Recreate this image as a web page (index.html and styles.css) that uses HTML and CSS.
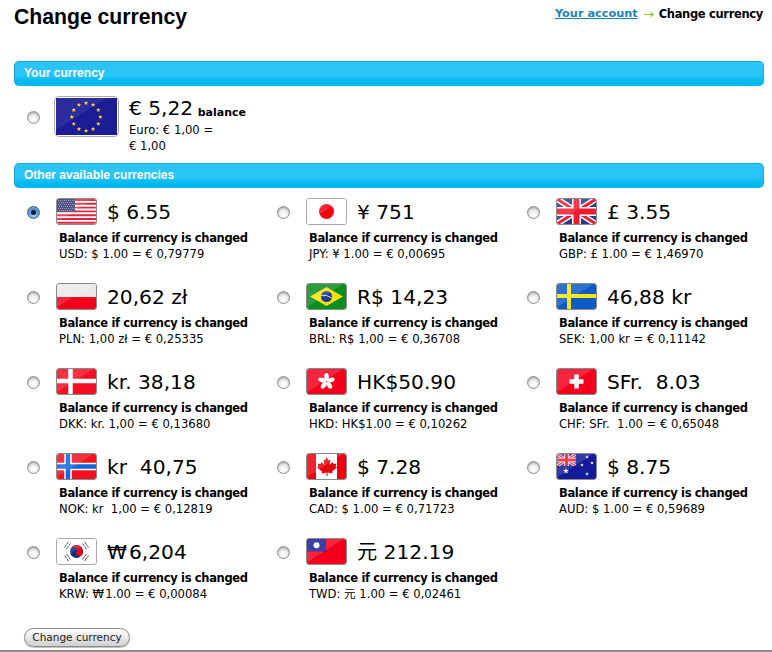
FILE: index.html
```html
<!DOCTYPE html>
<html lang="en">
<head>
<meta charset="utf-8">
<title>Change currency</title>
<link rel="stylesheet" href="styles.css">
</head>
<body>
<svg class="defs" width="0" height="0" aria-hidden="true">
  <symbol id="star" viewBox="-2 -2 4 4"><path d="M0-2 .5-.6 1.9-.6.8.2 1.2 1.6 0 .8-1.2 1.6-.8.2-1.9-.6-.5-.6Z" fill="currentColor"/></symbol>
  <symbol id="jack" viewBox="0 0 39 25" preserveAspectRatio="none">
    <rect width="39" height="25" fill="#2a3a8c"/>
    <path d="M0 0 39 25M39 0 0 25" stroke="#fff" stroke-width="6"/>
    <path d="M0 0 39 25M39 0 0 25" stroke="#ee1c30" stroke-width="3"/>
    <path d="M19.5 0V25M0 12.5H39" stroke="#fff" stroke-width="9"/>
    <path d="M19.5 0V25M0 12.5H39" stroke="#ee1c30" stroke-width="6"/>
  </symbol>
</svg>
<main class="page">
  <header class="top">
    <h1 class="title">Change currency</h1>
    <nav class="crumbs"><a href="#" class="crumb-link">Your account</a><svg class="crumb-arrow" viewBox="0 0 10 7" aria-hidden="true"><path d="M0 3.500H8M6.500 1.500 9.500 3.500 6.500 5.500" fill="none" stroke="#8ccb2a" stroke-width="1.100"/></svg><span class="crumb-here">Change currency</span></nav>
  </header>

  <form class="form">
    <h2 class="bar">Your currency</h2>
    <div class="current">
      <span class="radio"></span>
      <span class="flag flag-big">
        <svg viewBox="0 0 63 39" class="flag-art" preserveAspectRatio="none">
          <rect width="63" height="39" fill="#1c1c96"/>
          <g color="#ffd91a">
            <use href="#star" x="28.5" y="2.8" width="5" height="5"/>
            <use href="#star" x="35.8" y="4.8" width="5" height="5"/>
            <use href="#star" x="41.2" y="10.2" width="5" height="5"/>
            <use href="#star" x="43.2" y="17.5" width="5" height="5"/>
            <use href="#star" x="41.2" y="24.8" width="5" height="5"/>
            <use href="#star" x="35.8" y="30.2" width="5" height="5"/>
            <use href="#star" x="28.5" y="32.2" width="5" height="5"/>
            <use href="#star" x="21.2" y="30.2" width="5" height="5"/>
            <use href="#star" x="15.8" y="24.8" width="5" height="5"/>
            <use href="#star" x="13.8" y="17.5" width="5" height="5"/>
            <use href="#star" x="15.8" y="10.2" width="5" height="5"/>
            <use href="#star" x="21.2" y="4.8" width="5" height="5"/>
          </g>
        </svg>
      </span>
      <div class="current-info">
        <div class="amount">€ 5,22 <span class="amount-note">balance</span></div>
        <div class="rate">Euro: € 1,00 = € 1,00</div>
      </div>
    </div>

    <h2 class="bar">Other available currencies</h2>
    <div class="grid">
      <div class="cur">
        <div class="cur-head"><span class="radio radio-on"></span>
          <span class="flag"><svg viewBox="0 0 39 25" class="flag-art"><rect width="39" height="25" fill="#fff"/><path d="M0 1H39M0 4.800H39M0 8.600H39M0 12.400H39M0 16.200H39M0 20H39M0 23.800H39" stroke="#e0263a" stroke-width="1.900"/><rect width="18" height="12.500" fill="#30346f"/><path d="M1 1.500H18M2 3.500H18M1 5.500H18M2 7.500H18M1 9.500H18M2 11.500H18" stroke="#a9adc9" stroke-width=".8" stroke-dasharray=".9 1.100"/></svg></span>
          <span class="amount">$ 6.55</span></div>
        <div class="cur-body"><div class="note">Balance if currency is changed</div><div class="rate">USD: $ 1.00 = € 0,79779</div></div>
      </div>
      <div class="cur">
        <div class="cur-head"><span class="radio"></span>
          <span class="flag flag-thin"><svg viewBox="0 0 39 25" class="flag-art"><rect width="39" height="25" fill="#fff"/><circle cx="19.500" cy="12.500" r="7.500" fill="#f5000e"/></svg></span>
          <span class="amount">¥ 751</span></div>
        <div class="cur-body"><div class="note">Balance if currency is changed</div><div class="rate">JPY: ¥ 1.00 = € 0,00695</div></div>
      </div>
      <div class="cur">
        <div class="cur-head"><span class="radio"></span>
          <span class="flag"><svg viewBox="0 0 39 25" class="flag-art"><use href="#jack" width="39" height="25"/></svg></span>
          <span class="amount">£ 3.55</span></div>
        <div class="cur-body"><div class="note">Balance if currency is changed</div><div class="rate">GBP: £ 1.00 = € 1,46970</div></div>
      </div>

      <div class="cur">
        <div class="cur-head"><span class="radio"></span>
          <span class="flag"><svg viewBox="0 0 39 25" class="flag-art"><rect width="39" height="13" fill="#e9e9e9"/><rect y="13" width="39" height="12" fill="#f5001c"/></svg></span>
          <span class="amount">20,62 zł</span></div>
        <div class="cur-body"><div class="note">Balance if currency is changed</div><div class="rate">PLN: 1,00 zł = € 0,25335</div></div>
      </div>
      <div class="cur">
        <div class="cur-head"><span class="radio"></span>
          <span class="flag"><svg viewBox="0 0 39 25" class="flag-art"><rect width="39" height="25" fill="#0a8c1e"/><path d="M19.500 3 36 12.500 19.500 22 3 12.500Z" fill="#f7e011"/><circle cx="19.500" cy="12.500" r="5.600" fill="#1b3d8f"/><path d="M14.200 11.500Q20 10.500 24.800 14" stroke="#fff" stroke-width=".8" fill="none"/></svg></span>
          <span class="amount">R$ 14,23</span></div>
        <div class="cur-body"><div class="note">Balance if currency is changed</div><div class="rate">BRL: R$ 1,00 = € 0,36708</div></div>
      </div>
      <div class="cur">
        <div class="cur-head"><span class="radio"></span>
          <span class="flag"><svg viewBox="0 0 39 25" class="flag-art"><rect width="39" height="25" fill="#0b5bc4"/><path d="M0 12H39M12 0V25" stroke="#fbe316" stroke-width="4"/></svg></span>
          <span class="amount">46,88 kr</span></div>
        <div class="cur-body"><div class="note">Balance if currency is changed</div><div class="rate">SEK: 1,00 kr = € 0,11142</div></div>
      </div>

      <div class="cur">
        <div class="cur-head"><span class="radio"></span>
          <span class="flag"><svg viewBox="0 0 39 25" class="flag-art"><rect width="39" height="25" fill="#f50f22"/><path d="M0 12H39M13.500 0V25" stroke="#fff" stroke-width="4.500"/></svg></span>
          <span class="amount">kr. 38,18</span></div>
        <div class="cur-body"><div class="note">Balance if currency is changed</div><div class="rate">DKK: kr. 1,00 = € 0,13680</div></div>
      </div>
      <div class="cur">
        <div class="cur-head"><span class="radio"></span>
          <span class="flag"><svg viewBox="0 0 39 25" class="flag-art"><rect width="39" height="25" fill="#f5001c"/><g fill="#fff"><ellipse cx="19.500" cy="8" rx="2.300" ry="4"/><ellipse cx="19.500" cy="8" rx="2.300" ry="4" transform="rotate(72 19.500 12.500)"/><ellipse cx="19.500" cy="8" rx="2.300" ry="4" transform="rotate(144 19.500 12.500)"/><ellipse cx="19.500" cy="8" rx="2.300" ry="4" transform="rotate(216 19.500 12.500)"/><ellipse cx="19.500" cy="8" rx="2.300" ry="4" transform="rotate(288 19.500 12.500)"/></g></svg></span>
          <span class="amount">HK$50.90</span></div>
        <div class="cur-body"><div class="note">Balance if currency is changed</div><div class="rate">HKD: HK$1.00 = € 0,10262</div></div>
      </div>
      <div class="cur">
        <div class="cur-head"><span class="radio"></span>
          <span class="flag"><svg viewBox="0 0 39 25" class="flag-art"><rect width="39" height="25" fill="#f5001c"/><path d="M19.500 5.500V19.500M12.500 12.500H26.500" stroke="#fff" stroke-width="4.500"/></svg></span>
          <span class="amount">SFr.&nbsp; 8.03</span></div>
        <div class="cur-body"><div class="note">Balance if currency is changed</div><div class="rate">CHF: SFr.&nbsp; 1.00 = € 0,65048</div></div>
      </div>

      <div class="cur">
        <div class="cur-head"><span class="radio"></span>
          <span class="flag"><svg viewBox="0 0 39 25" class="flag-art"><rect width="39" height="25" fill="#f5101f"/><path d="M0 12.500H39M11 0V25" stroke="#fff" stroke-width="7.500"/><path d="M0 12.500H39M11 0V25" stroke="#1167d8" stroke-width="4.500"/></svg></span>
          <span class="amount">kr&nbsp; 40,75</span></div>
        <div class="cur-body"><div class="note">Balance if currency is changed</div><div class="rate">NOK: kr&nbsp; 1,00 = € 0,12819</div></div>
      </div>
      <div class="cur">
        <div class="cur-head"><span class="radio"></span>
          <span class="flag"><svg viewBox="0 0 39 25" class="flag-art"><rect width="39" height="25" fill="#f0000c"/><rect x="9" width="21" height="25" fill="#fff"/><path d="M19.500 3l2 3.500 2-1-1 5.500 3-3 1 2 3-.5-1 3 1.500 1-5 4 .5 2-5-1v3.500h-1v-3.500l-5 1 .5-2-5-4 1.500-1-1-3 3 .5 1-2 3 3-1-5.500 2 1z" fill="#e8000c"/></svg></span>
          <span class="amount">$ 7.28</span></div>
        <div class="cur-body"><div class="note">Balance if currency is changed</div><div class="rate">CAD: $ 1.00 = € 0,71723</div></div>
      </div>
      <div class="cur">
        <div class="cur-head"><span class="radio"></span>
          <span class="flag"><svg viewBox="0 0 39 25" class="flag-art"><rect width="39" height="25" fill="#141c9c"/><svg width="19" height="12" viewBox="0 0 39 25" preserveAspectRatio="none"><use href="#jack" width="39" height="25"/></svg><g color="#fff"><use href="#star" x="6" y="14" width="6" height="6"/><use href="#star" x="28" y="1" width="4" height="4"/><use href="#star" x="33" y="7" width="4" height="4"/><use href="#star" x="23" y="9" width="4" height="4"/><use href="#star" x="28" y="18" width="4" height="4"/></g></svg></span>
          <span class="amount">$ 8.75</span></div>
        <div class="cur-body"><div class="note">Balance if currency is changed</div><div class="rate">AUD: $ 1.00 = € 0,59689</div></div>
      </div>

      <div class="cur">
        <div class="cur-head"><span class="radio"></span>
          <span class="flag flag-thin"><svg viewBox="0 0 39 25" class="flag-art"><rect width="39" height="25" fill="#fff"/><circle cx="19.500" cy="12.500" r="6.500" fill="#0f2a80"/><path d="M13 12.500a6.500 6.500 0 0 1 13 0 3.250 3.250 0 0 1-6.500 0 3.250 3.250 0 0 0-6.500 0Z" fill="#e2001c" transform="rotate(25 19.500 12.500)"/><g stroke="#444" stroke-width="1" stroke-dasharray="3.500 .8"><path d="M7.500 8.500 11.500 3M9.500 10 13.500 4.500M25.500 4.500 29.500 10M27.500 3 31.500 8.500M7.500 16.500 11.500 22M9.500 15 13.500 20.500M25.500 20.500 29.500 15M27.500 22 31.500 16.500"/></g></svg></span>
          <span class="amount">₩&#8202;6,204</span></div>
        <div class="cur-body"><div class="note">Balance if currency is changed</div><div class="rate">KRW: ₩&#8202;1.00 = € 0,00084</div></div>
      </div>
      <div class="cur">
        <div class="cur-head"><span class="radio"></span>
          <span class="flag"><svg viewBox="0 0 39 25" class="flag-art"><rect width="39" height="25" fill="#f5001c"/><rect width="19" height="12.500" fill="#1d1f98"/><circle cx="9.500" cy="6.200" r="3" fill="#fff"/></svg></span>
          <span class="amount">元 212.19</span></div>
        <div class="cur-body"><div class="note">Balance if currency is changed</div><div class="rate">TWD: 元 1.00 = € 0,02461</div></div>
      </div>
    </div>
    <button type="button" class="submit">Change currency</button>
  </form>
</main>
</body>
</html>
```

FILE: styles.css
```css
* { box-sizing: border-box; }
html, body { margin: 0; padding: 0; background: #fff; }
body {
  color: #000;
  font-family: "DejaVu Sans", "Noto Sans CJK SC", sans-serif;
  overflow: hidden;
}
.defs { position: absolute; }
.page {
  width: 772px;
  height: 652px;
  padding: 0 8px 0 14px;
  border-bottom: 2px solid #8c8c8c;
}
.top {
  display: flex;
  justify-content: space-between;
  align-items: flex-start;
  height: 61px;
}
.title {
  margin: 4px 0 0;
  font: bold 21.200px/26px "Liberation Sans", Arial, sans-serif;
}
.crumbs {
  display: flex;
  align-items: center;
  margin: 6px 1px 0 0;
  font-size: 11.500px;
  line-height: 16px;
  white-space: nowrap;
}
.crumb-link {
  color: #1a85b8;
  font-weight: bold;
  font-size: 11.300px;
}
.crumb-arrow {
  flex: none;
  width: 10px;
  height: 7px;
  margin: 0 5px 0 6px;
}
.crumb-here {
  font-weight: bold;
  letter-spacing: -.33px;
}

.bar {
  margin: 0;
  height: 25px;
  padding-left: 9px;
  color: #fff;
  font: bold 12px/22px "Liberation Sans", Arial, sans-serif;
  border-radius: 5px;
  border: 1px solid #1ea6d6;
  border-width: 1px 1px 0 1px;
  background: linear-gradient(#2bc5f6 0, #29c4f6 55%, #00b8f2 82%, #00b8f2 100%);
}

.current {
  display: flex;
  height: 77px;
  padding-top: 10px;
}
.current .radio { margin: 15px 0 0 13px; }
.current .flag-big {
  width: 65px;
  height: 41px;
  margin-left: 14px;
  padding: 1px;
  border-radius: 5px;
  border-color: #a8a8a8;
}
.current-info { width: 92px; margin-left: 10px; }
.current-info .amount { display: block; line-height: 23px; margin-top: 1px; }
.amount-note {
  margin-left: -2px;
  font-size: 11px;
  font-weight: bold;
  vertical-align: -1px;
}
.current-info .rate { line-height: 16px; margin-top: -2px; }

.grid {
  display: grid;
  grid-template-columns: repeat(3, 250px);
  grid-auto-rows: 85px;
  padding-top: 10px;
}
.cur-head {
  display: flex;
  align-items: flex-start;
  height: 27px;
}
.cur-head .radio { margin: 8px 0 0 13px; }
.cur-head .flag { margin-left: 16px; }
.cur-head .amount { margin: 1px 0 0 10px; }
.cur-body { margin: 5px 0 0 45px; }

.radio {
  flex: none;
  display: block;
  width: 13px;
  height: 13px;
  border-radius: 50%;
  border: 1px solid #8f8f8f;
  background: radial-gradient(circle at 50% 70%, #fff 0, #f4f4f4 35%, #c9c9c9 85%);
  box-shadow: inset 0 1px 1px #aaa;
}
.radio-on {
  position: relative;
  border-color: #3a5f96;
  background: radial-gradient(circle at 50% 75%, #a9d4f7 0, #5b9be0 50%, #2d5da8 100%);
}
.radio-on::after {
  content: "";
  position: absolute;
  left: 3px;
  top: 3px;
  width: 5px;
  height: 5px;
  border-radius: 50%;
  background: #0c1c40;
}

.flag {
  flex: none;
  position: relative;
  display: block;
  width: 41px;
  height: 27px;
  border: 1px solid #8a8a8a;
  border-radius: 3px;
  overflow: hidden;
  background: #fff;
}
.flag-thin { border-color: #a8a8a8; }
.flag::after {
  content: "";
  position: absolute;
  inset: 0;
  background: linear-gradient(to bottom right, rgba(255,255,255,.14) 0, rgba(255,255,255,.14) 46%, rgba(255,255,255,0) 47%);
}
.current .flag-big::after {
  background: linear-gradient(to bottom right, rgba(255,255,255,.07) 0, rgba(255,255,255,.07) 42%, rgba(255,255,255,0) 43%);
}
.flag-art { display: block; width: 100%; height: 100%; }

.amount {
  font-size: 20.200px;
  line-height: 27px;
  white-space: nowrap;
}
.note {
  font-size: 11.500px;
  font-weight: bold;
  letter-spacing: -.33px;
  line-height: 16px;
  white-space: nowrap;
}
.rate {
  font-size: 11.600px;
  line-height: 16px;
}
.cur-body .rate { white-space: nowrap; }

.submit {
  display: block;
  width: 106px;
  height: 19px;
  margin: 5px 0 0 10px;
  padding: 0;
  color: #222;
  font: 10.500px/17px "DejaVu Sans", sans-serif;
  border: 1px solid #8c8c8c;
  border-radius: 10px;
  background: linear-gradient(#fefefe 0, #e8e8e8 50%, #d0d0d0 100%);
  box-shadow: 0 1px 1px #bbb;
}
```
